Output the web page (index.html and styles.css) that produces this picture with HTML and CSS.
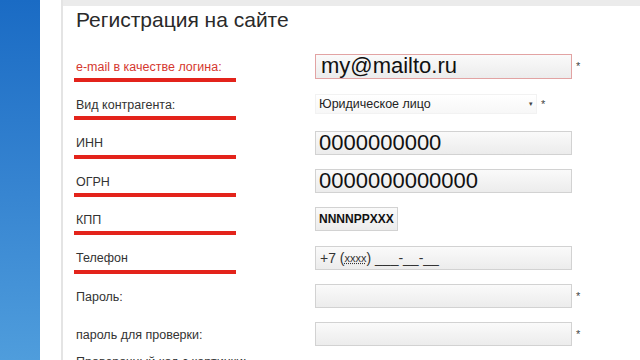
FILE: index.html
```html
<!DOCTYPE html>
<html lang="ru">
<head>
    <meta charset="UTF-8">
    <meta name="viewport" content="width=device-width, initial-scale=1.0">
    <title>Регистрация на сайте</title>
    <link rel="stylesheet" href="styles.css">
</head>
<body>
    <div class="sidebar"></div>
    <div class="gutter"></div>

    <main class="main">
        <div class="topbar"></div>

        <section class="page">
            <h1>Регистрация на сайте</h1>

            <form class="form">
                <div class="row">
                    <label class="label label-error">e-mail в качестве логина:</label>
                    <input class="field field-big field-error" type="text" value="my@mailto.ru">
                    <span class="star">*</span>
                </div>

                <div class="row">
                    <label class="label">Вид контрагента:</label>
                    <div class="select">
                        <span>Юридическое лицо</span>
                        <span class="arrow">&#9662;</span>
                    </div>
                    <span class="star">*</span>
                </div>

                <div class="row">
                    <label class="label">ИНН</label>
                    <input class="field field-big" type="text" value="0000000000">
                </div>

                <div class="row">
                    <label class="label">ОГРН</label>
                    <input class="field field-big" type="text" value="0000000000000">
                </div>

                <div class="row">
                    <label class="label">КПП</label>
                    <input class="field field-short" type="text" value="NNNNPPXXX">
                </div>

                <div class="row">
                    <label class="label">Телефон</label>
                    <div class="field field-phone">+7 (<u>xxxx</u>) ___-__-__</div>
                </div>

                <div class="row">
                    <label class="label label-plain">Пароль:</label>
                    <input class="field" type="password">
                    <span class="star">*</span>
                </div>

                <div class="row">
                    <label class="label label-plain">пароль для проверки:</label>
                    <input class="field" type="password">
                    <span class="star">*</span>
                </div>

                <div class="row row-note">
                    <label class="label label-plain">Проверочный код с картинки:</label>
                </div>
            </form>
        </section>
    </main>
</body>
</html>
```

FILE: styles.css
```css
body {
    margin: 0;
    height: 360px;
    overflow: hidden;
    display: flex;
    align-items: flex-start;
    background-color: #fff;
    color: #333;
    font-family: "Liberation Sans", Arial, sans-serif;
}

.sidebar {
    width: 40px;
    height: 100%;
    flex-shrink: 0;
    background: linear-gradient(to bottom, #1a6bc4, #3583d0 50%, #4f9ddc);
}

.gutter {
    width: 21px;
    height: 100%;
    flex-shrink: 0;
    border-right: 2px solid #e4e4e4;
}

.main {
    flex: 1;
}

.topbar {
    height: 6px;
    background-color: #ebebeb;
}

.page {
    padding-left: 11px;
}

h1 {
    margin: 0 0 15px;
    padding: 2px 0 0 2px;
    font-size: 21px;
    line-height: 24px;
    font-weight: normal;
    color: #2a2a2a;
}

.row {
    height: 38.3px;
    display: grid;
    grid-template-columns: 241px auto auto;
    align-items: center;
    justify-content: start;
}

.label {
    align-self: start;
    width: 160px;
    padding: 12.8px 0 4.3px 2px;
    font-size: 12.5px;
    line-height: 14px;
    color: #333;
    white-space: nowrap;
    border-bottom: 4px solid #e3231b;
}

.label-error {
    color: #d5382f;
}

.label-plain {
    border-bottom-color: transparent;
}

.row-note .label {
    padding-top: 2px;
}

.field {
    box-sizing: border-box;
    width: 257px;
    height: 24px;
    margin: 0;
    padding: 0 3px;
    border: 1px solid #d2d2d2;
    border-radius: 0;
    background: linear-gradient(to bottom, #fafafa, #ececec);
    font-family: "Liberation Sans", Arial, sans-serif;
    font-size: 13px;
    color: #111;
    outline: none;
}

.field-big {
    font-size: 22px;
    line-height: 22px;
}

.field-error {
    height: 25px;
    border-color: #e2a3a3;
    padding-left: 5px;
}

.field-short {
    width: 83px;
    font-size: 12px;
    font-weight: bold;
}

.field-phone {
    display: flex;
    align-items: center;
    padding-left: 4px;
    font-size: 14px;
    color: #333;
    white-space: pre;
}

.field-phone u {
    font-size: 11px;
    text-decoration-style: dotted;
}

.select {
    box-sizing: border-box;
    width: 222px;
    height: 20px;
    display: flex;
    align-items: center;
    justify-content: space-between;
    padding: 0 3px;
    border: 1px solid #f2f2f2;
    background: linear-gradient(to bottom, #fff, #f7f7f7);
    font-size: 12.5px;
    color: #222;
}

.arrow {
    font-size: 7px;
    color: #444;
}

.star {
    margin-left: 4px;
    font-size: 11px;
    color: #444;
}
```
